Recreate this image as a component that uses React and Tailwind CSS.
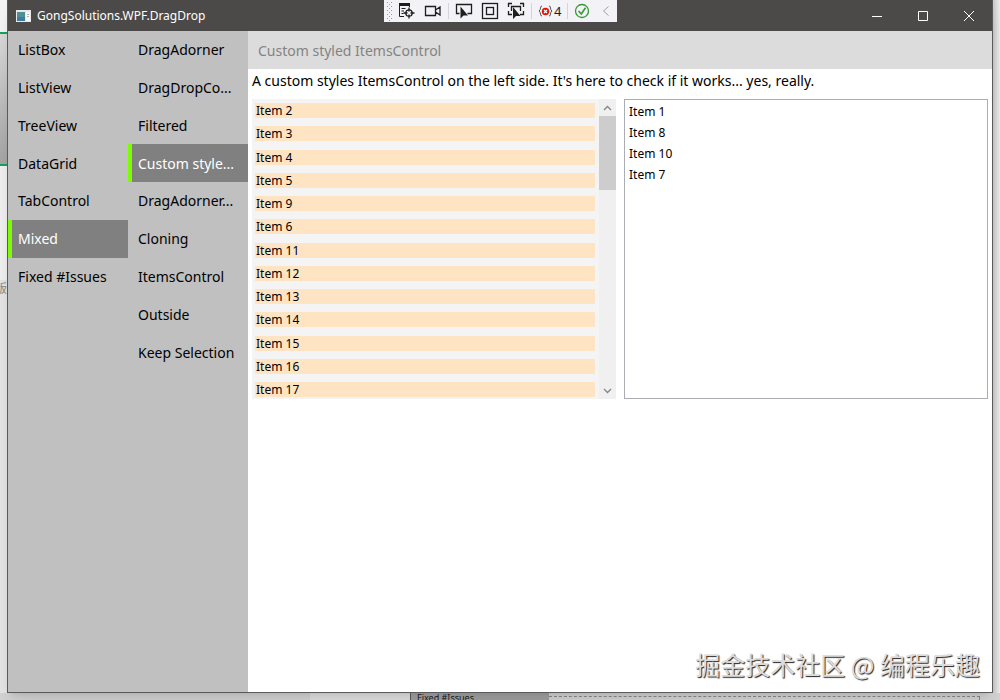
import { useState } from 'react'

const SECTIONS = [
  { key: 'listbox',    label: 'ListBox' },
  { key: 'listview',   label: 'ListView' },
  { key: 'treeview',   label: 'TreeView' },
  { key: 'datagrid',   label: 'DataGrid' },
  { key: 'tabcontrol', label: 'TabControl' },
  { key: 'mixed',      label: 'Mixed' },
  { key: 'issues',     label: 'Fixed #Issues' },
]

const PAGES = [
  { key: 'adorner',   label: 'DragAdorner' },
  { key: 'context',   label: 'DragDropCo...' },
  { key: 'filtered',  label: 'Filtered' },
  { key: 'custom',    label: 'Custom style...' },
  { key: 'template',  label: 'DragAdorner...' },
  { key: 'cloning',   label: 'Cloning' },
  { key: 'items',     label: 'ItemsControl' },
  { key: 'outside',   label: 'Outside' },
  { key: 'selection', label: 'Keep Selection' },
]

const LEFT_ITEMS = [2, 3, 4, 5, 9, 6, 11, 12, 13, 14, 15, 16, 17]
const RIGHT_ITEMS = [1, 8, 10, 7]

function NavColumn({ label, items, active, onSelect }) {
  return (
    <nav aria-label={label} className="w-[120px] shrink-0">
      <div className="grid h-[340px] grid-rows-9">
        {items.map((item) => (
          <button
            key={item.key}
            onClick={() => onSelect(item.key)}
            className={
              item.key === active
                ? 'border-l-4 border-[#7cfc00] bg-[#808080] pl-1.5 text-left whitespace-nowrap text-white'
                : 'pl-2.5 text-left whitespace-nowrap text-black'
            }
          >
            {item.label}
          </button>
        ))}
      </div>
    </nav>
  )
}

function Separator() {
  return <span className="h-4 w-px shrink-0 bg-[#d4d4dc]" />
}

// Visual Studio in-app debugging toolbar
function DebugToolbar() {
  return (
    <div className="absolute top-0 left-[376px] flex h-[22px] w-[233px] items-center bg-[#f2f2f7] text-[#1e1e1e]">
      <svg width="12" height="22" viewBox="0 0 12 22" fill="#9a9aa2" aria-hidden="true">
        {[2, 6, 10, 14, 18].map((y) => (
          <g key={y}>
            <rect x="3" y={y} width="1" height="1" />
            <rect x="7" y={y} width="1" height="1" />
            <rect x="5" y={y + 2} width="1" height="1" />
          </g>
        ))}
      </svg>
      <button aria-label="Go to live visual tree" className="ml-0.5">
        <svg width="18" height="18" viewBox="0 0 18 18" fill="none" stroke="currentColor">
          <path d="M1.500 2v12.500H6M11.500 2v3" />
          <path d="M1 2.500h11" strokeWidth="3" />
          <path d="M3.500 6.500h4M3.500 9h2.500M3.500 11.500h2" />
          <circle cx="11" cy="11" r="3.200" strokeWidth="1.300" />
          <path d="M11 5.500v4M11 12.500v4M5.500 11h4M12.500 11h4" strokeWidth="1.300" />
        </svg>
      </button>
      <button aria-label="Show XAML binding recorder" className="ml-2">
        <svg width="18" height="18" viewBox="0 0 18 18" fill="none" stroke="currentColor" strokeWidth="1.300">
          <path d="M1.500 4.500h10v9h-10zM11.500 8l4.500-3v8l-4.500-3z" />
        </svg>
      </button>
      <span className="ml-1.5 flex"><Separator /></span>
      <button aria-label="Select element" className="ml-1.5">
        <svg width="18" height="18" viewBox="0 0 18 18" fill="none" stroke="currentColor" strokeWidth="1.300">
          <path d="M4.500 11.500h-3v-9h15v9h-4" />
          <path d="M5.500 4.500v12l3-3h4.500z" fill="currentColor" stroke="none" />
        </svg>
      </button>
      <button aria-label="Display layout adorners" className="ml-2">
        <svg width="18" height="18" viewBox="0 0 18 18" fill="none" stroke="currentColor" strokeWidth="1.300">
          <rect x="1.500" y="1.500" width="15" height="15" />
          <rect x="5.500" y="5.500" width="7" height="7" />
        </svg>
      </button>
      <button aria-label="Track focused element" className="ml-2">
        <svg width="18" height="18" viewBox="0 0 18 18" fill="none" stroke="currentColor" strokeWidth="1.300">
          <path d="M1.500 5V1.500H5M13 1.500h3.500V5M16.500 9v3.500H13M1.500 9v3.500H5" />
          <path d="M4.500 9V4.500h9V9" />
          <path d="M6 5v12l3-3h4.500z" fill="currentColor" stroke="none" />
        </svg>
      </button>
      <span className="ml-1.5 flex"><Separator /></span>
      <button aria-label="Binding failures" className="ml-1.5 flex items-center text-[13px] leading-none">
        <svg width="16" height="16" viewBox="0 0 16 16" fill="none">
          <path d="M4 3Q2.500 3 2.500 5T1 8q1.500 1 1.500 3T4 13M11 3q1.500 0 1.500 2T14 8q-1.500 1-1.500 3T11 13" stroke="#55555a" />
          <circle cx="7.500" cy="8.500" r="3.700" fill="#e51400" />
          <path d="M6 7l3 3M9 7l-3 3" stroke="#fff" strokeWidth="1.200" />
        </svg>
        4
      </button>
      <span className="ml-1.5 flex"><Separator /></span>
      <button aria-label="Hot reload" className="ml-1.5">
        <svg width="16" height="16" viewBox="0 0 16 16" fill="none" stroke="#339933" strokeWidth="1.300">
          <circle cx="8" cy="8" r="6.500" />
          <path d="M4.500 8l2.800 3L11.500 4.800" strokeWidth="1.600" />
        </svg>
      </button>
      <button aria-label="Collapse toolbar" className="ml-3">
        <svg width="8" height="12" viewBox="0 0 8 12" fill="none" stroke="#a0a0a0">
          <path d="M6.500 1.500L1.500 6l5 4.500" />
        </svg>
      </button>
    </div>
  )
}

function TitleBar() {
  return (
    <header className="flex h-[31px] shrink-0 items-center bg-[#4c4a48] text-white">
      <svg width="15" height="12" viewBox="0 0 15 12" className="ml-2" aria-hidden="true">
        <rect width="15" height="12" fill="#e8e8e8" />
        <rect x="1" y="2" width="8" height="9" fill="#4f8f96" />
        <rect x="1" y="7" width="8" height="4" fill="#3f7aa0" />
        <rect x="10" y="2" width="4" height="9" fill="#fafafa" />
        <path d="M11 4.500h2M11 6.500h2" stroke="#b0b0b0" />
      </svg>
      <h1 className="ml-1.5 grow text-[12px]">GongSolutions.WPF.DragDrop</h1>
      <button aria-label="Minimize" className="flex h-full w-[46px] items-center justify-center">
        <svg width="10" height="10" viewBox="0 0 10 10" stroke="currentColor"><path d="M0 5.500h10" /></svg>
      </button>
      <button aria-label="Maximize" className="flex h-full w-[46px] items-center justify-center">
        <svg width="10" height="10" viewBox="0 0 10 10" fill="none" stroke="currentColor"><path d="M.5.5h9v9h-9z" /></svg>
      </button>
      <button aria-label="Close" className="flex h-full w-[46px] items-center justify-center">
        <svg width="10" height="10" viewBox="0 0 10 10" stroke="currentColor"><path d="M0 0l10 10M10 0L0 10" /></svg>
      </button>
    </header>
  )
}

function ScrollBar() {
  return (
    <div className="flex w-[17px] shrink-0 flex-col bg-[#f0f0f0] text-[#858585]">
      <button aria-label="Scroll up" className="flex h-[17px] items-center justify-center">
        <svg width="9" height="6" viewBox="0 0 9 6" fill="none" stroke="currentColor" strokeWidth="1.300"><path d="M1 5l3.500-3.500L8 5" /></svg>
      </button>
      <div className="h-[74px] bg-[#cdcdcd]" />
      <div className="grow" />
      <button aria-label="Scroll down" className="flex h-[17px] items-center justify-center">
        <svg width="9" height="6" viewBox="0 0 9 6" fill="none" stroke="currentColor" strokeWidth="1.300"><path d="M1 1l3.500 3.500L8 1" /></svg>
      </button>
    </div>
  )
}

export default function App() {
  const [section, setSection] = useState('mixed')
  const [page, setPage] = useState('custom')

  return (
    <div className="flex h-screen flex-col overflow-hidden bg-[#e6e6e6] font-['Noto_Sans','Open_Sans',sans-serif] text-[14px]">
      <div className="flex min-h-0 grow">
        {/* ── Desktop left of the window ── */}
        <div className="flex w-[7px] shrink-0 flex-col overflow-hidden bg-[#e4e4e4]">
          <div className="h-[34px] shrink-0 border-b-2 border-[#18a05e] bg-[#f4f4f4]" />
          <div className="h-[132px] shrink-0 border-b-2 border-[#18a05e] bg-linear-to-b from-[#d8d8d8] to-[#a4a4a4]" />
          <div className="h-[114px] shrink-0 bg-[#efefef]" />
          <span className="flex h-4 justify-end font-['Noto_Sans_CJK_SC',sans-serif] text-[12px] leading-4 text-[#888888]">版</span>
        </div>

        {/* ── Window ── */}
        <div className="relative flex min-w-0 grow flex-col border-x border-b border-[#5a5a5a] bg-white shadow-lg">
          <TitleBar />

          <div className="flex min-h-0 grow">
            <div className="flex shrink-0 bg-[#c0c0c0]">
              <NavColumn label="Sections" items={SECTIONS} active={section} onSelect={setSection} />
              <NavColumn label="Pages" items={PAGES} active={page} onSelect={setPage} />
            </div>

            <main className="min-w-0 grow">
              <h2 className="flex h-[38px] items-center bg-[#dcdcdc] px-2.5 text-[#838383]">Custom styled ItemsControl</h2>
              <p className="px-1 pt-0.5 pb-2 leading-5 whitespace-nowrap text-black">
                A custom styles ItemsControl on the left side. It's here to check if it works... yes, really.
              </p>

              <div className="grid h-[300px] grid-cols-2 gap-2 px-1 text-[12px] text-black">
                <div className="flex bg-[#f4f4f5]">
                  <ul className="flex grow flex-col justify-between pt-1 pr-1 pb-0.5 pl-[3px] leading-[15px]">
                    {LEFT_ITEMS.map((n) => (
                      <li key={n} className="bg-[#ffe4c4] px-px">Item {n}</li>
                    ))}
                  </ul>
                  <ScrollBar />
                </div>
                <ul className="border border-[#abadb3] px-1 py-px leading-[21px]">
                  {RIGHT_ITEMS.map((n) => (
                    <li key={n}>Item {n}</li>
                  ))}
                </ul>
              </div>
            </main>
          </div>

          <DebugToolbar />

          {/* watermark */}
          <p className="absolute right-3 bottom-3 font-['Noto_Sans_CJK_SC',sans-serif] text-[25px] leading-8 whitespace-nowrap text-[#dcdcdc] [text-shadow:1px_1px_1px_#222]">
            掘金技术社区 @ 编程乐趣
          </p>
        </div>

        <div className="w-[7px] shrink-0 bg-linear-to-r from-[#c8c8c8] to-[#ececec]" />
      </div>

      {/* ── Window behind, peeking out below ── */}
      <div className="flex h-[7px] shrink-0 overflow-hidden bg-[#d2d2d2]">
        <div className="w-[310px] shrink-0" />
        <div className="w-[100px] shrink-0 bg-[#dedede]" />
        <div className="w-[139px] shrink-0 border-l border-[#5a5a5a] bg-[#a0a0a0] pl-1.5 text-[9px] leading-[9px] text-[#1a1a1a]">Fixed #Issues</div>
        <div className="mt-[3px] mr-5 grow border-t border-r border-dashed border-[#888888]" />
      </div>
    </div>
  )
}
